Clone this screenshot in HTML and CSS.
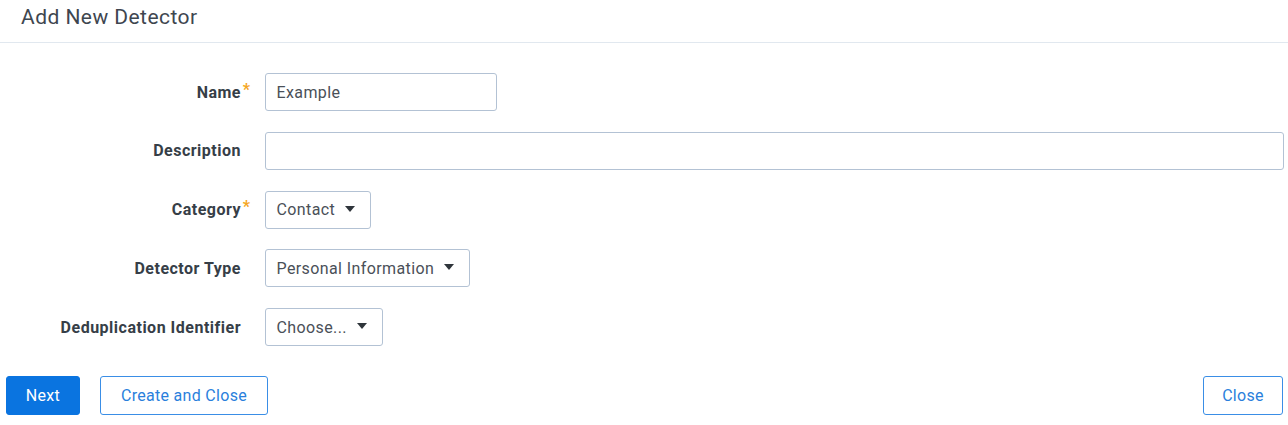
FILE: index.html
```html
<!DOCTYPE html>
<html>
<head>
<meta charset="utf-8">
<link rel="stylesheet" href="styles.css">
</head>
<body>
<div class="modal">
  <div class="header"><h1 class="title">Add New Detector</h1></div>
  <form class="form">
    <div class="row">
      <label class="label req">Name</label>
      <div class="field"><input class="input input-name" type="text" value="Example"></div>
    </div>
    <div class="row">
      <label class="label">Description</label>
      <div class="field grow"><input class="input input-full" type="text" value=""></div>
    </div>
    <div class="row">
      <label class="label req">Category</label>
      <div class="field"><button type="button" class="select">Contact<span class="caret"></span></button></div>
    </div>
    <div class="row">
      <label class="label">Detector Type</label>
      <div class="field"><button type="button" class="select">Personal Information<span class="caret"></span></button></div>
    </div>
    <div class="row">
      <label class="label">Deduplication Identifier</label>
      <div class="field"><button type="button" class="select">Choose...<span class="caret"></span></button></div>
    </div>
  </form>
  <div class="footer">
    <div class="footer-left">
      <button type="button" class="btn btn-primary">Next</button>
      <button type="button" class="btn btn-outline btn-create">Create and Close</button>
    </div>
    <button type="button" class="btn btn-outline btn-close">Close</button>
  </div>
</div>
</body>
</html>
```
FILE: styles.css
```css
* { box-sizing: border-box; }
html, body { margin: 0; padding: 0; background: #fff; }
body { font-family: Roboto, "Noto Sans", Arial, sans-serif; color: #3c444d; width: 1288px; height: 425px; overflow: hidden; }

.header {
  height: 43px;
  border-bottom: 1px solid #e1e8ef;
  padding-left: 21px;
  display: flex;
  align-items: center;
}
.title {
  margin: 0;
  font-size: 21px;
  font-weight: 400;
  letter-spacing: 0.45px;
  color: #3e464f;
  line-height: 1;
  padding-bottom: 8px;
}

.form {
  padding: 30px 4px 0 0;
  display: flex;
  flex-direction: column;
  gap: 20.75px;
}
.row {
  display: flex;
  align-items: center;
  gap: 24px;
}
.label {
  width: 241px;
  flex: none;
  text-align: right;
  font-size: 16px;
  font-weight: 700;
  letter-spacing: 0.5px;
  color: #363e47;
  position: relative;
  margin-right: -0.5px;
}
.label.req::after {
  content: "*";
  color: #f5a623;
  position: absolute;
  right: -9px;
  top: -3px;
  font-weight: 700;
  letter-spacing: 0;
}
.field { display: flex; }
.field.grow { flex: 1; }

.input {
  height: 38px;
  border: 1px solid #b3c2d4;
  border-radius: 3px;
  padding: 0 11px;
  font-family: inherit;
  font-size: 16px;
  letter-spacing: 0.4px;
  color: #4a5058;
  background: #fff;
  outline: none;
}
.input-name { width: 232px; }
.input-full { width: 100%; }

.select {
  height: 38px;
  border: 1px solid #b3c2d4;
  border-radius: 3px;
  padding: 0 15px 0 11px;
  font-family: inherit;
  font-size: 16px;
  letter-spacing: 0.4px;
  color: #4a5058;
  background: #fff;
  display: flex;
  align-items: center;
  gap: 10px;
}
.caret {
  width: 0;
  height: 0;
  border-left: 5.5px solid transparent;
  border-right: 5.5px solid transparent;
  border-top: 6px solid #2f353b;
  margin-top: -2px;
}

.footer {
  margin-top: 30px;
  padding: 0 5px 0 6px;
  display: flex;
  justify-content: space-between;
  align-items: center;
}
.footer-left { display: flex; gap: 20px; }
.btn {
  height: 39px;
  border-radius: 3px;
  font-family: inherit;
  font-size: 16px;
  letter-spacing: 0.3px;
  padding: 0;
  cursor: pointer;
}
.btn-primary {
  background: #0a74e0;
  border: 1px solid #0a74e0;
  color: #fff;
  width: 74px;
}
.btn-outline {
  background: #fff;
  border: 1px solid #3a8ee6;
  color: #2a7fdc;
}
.btn-create { width: 168px; }
.btn-close { width: 80px; }
```
